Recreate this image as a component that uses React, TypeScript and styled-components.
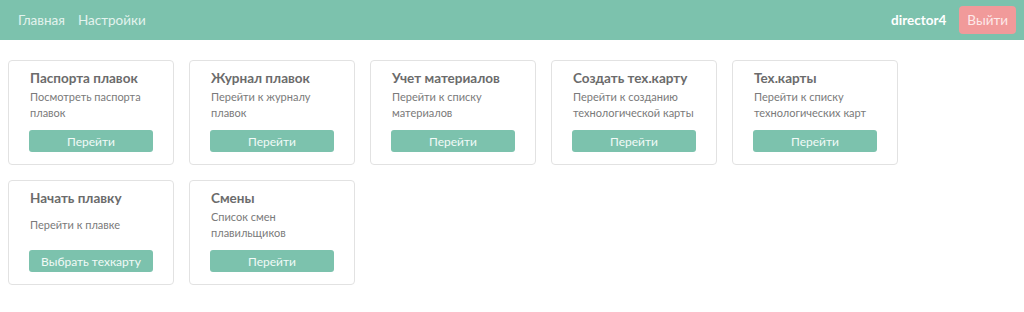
import styled, { createGlobalStyle } from 'styled-components'

const GlobalStyle = createGlobalStyle`
  body {
    margin: 0;
    background: #fff;
    font-family: Lato, "Open Sans", sans-serif;
  }
`;

const NavBar = styled.header`
  height: 40px;
  background: #7cc2ad;
  display: flex;
  align-items: center;
  justify-content: space-between;
  padding: 0 8px 0 18px;
  box-sizing: border-box;
`;

const NavLinks = styled.nav`
  display: flex;
  gap: 13px;
`;

const NavLink = styled.a`
  color: #e3f3ee;
  font-size: 13.5px;
  text-decoration: none;
  cursor: pointer;
`;

const UserBox = styled.div`
  display: flex;
  align-items: center;
  gap: 13px;
`;

const UserName = styled.span`
  color: #fff;
  font-weight: 700;
  font-size: 13.5px;
`;

const LogoutButton = styled.button`
  background: #f19a9a;
  color: #fde9e9;
  border: none;
  border-radius: 4px;
  height: 28px;
  padding: 0 8px;
  font-family: inherit;
  font-size: 13.5px;
  cursor: pointer;
`;

const Grid = styled.main`
  display: grid;
  grid-template-columns: repeat(5, 166px);
  gap: 15px 15px;
  padding: 20px 8px;
`;

const Card = styled.div`
  display: flex;
  flex-direction: column;
  justify-content: space-between;
  border: 1px solid #e2e2e2;
  border-radius: 4px;
  padding: 9px 20px 12px;
`;

const Title = styled.h3`
  margin: 0 0 3px 1px;
  font-size: 13.5px;
  line-height: 16px;
  font-weight: 700;
  color: #6b6b6b;
  white-space: nowrap;
`;

const Desc = styled.p`
  margin: 0 0 0 1px;
  font-size: 11px;
  line-height: 16px;
  color: #7a7a7a;
`;

const GoButton = styled.button`
  margin-top: 9px;
  width: 100%;
  height: 22px;
  background: #7cc2ad;
  color: #f2faf7;
  border: none;
  border-radius: 3px;
  font-family: inherit;
  font-size: 12px;
  cursor: pointer;
`;

const cards = [
  { title: 'Паспорта плавок', desc: 'Посмотреть паспорта плавок', action: 'Перейти' },
  { title: 'Журнал плавок', desc: 'Перейти к журналу плавок', action: 'Перейти' },
  { title: 'Учет материалов', desc: 'Перейти к списку материалов', action: 'Перейти' },
  { title: 'Создать тех.карту', desc: 'Перейти к созданию технологической карты', action: 'Перейти' },
  { title: 'Тех.карты', desc: 'Перейти к списку технологических карт', action: 'Перейти' },
  { title: 'Начать плавку', desc: 'Перейти к плавке', action: 'Выбрать техкарту' },
  { title: 'Смены', desc: 'Список смен плавильщиков', action: 'Перейти' },
];

function App() {
  return (
    <>
      <GlobalStyle />
      <NavBar>
        <NavLinks>
          <NavLink>Главная</NavLink>
          <NavLink>Настройки</NavLink>
        </NavLinks>
        <UserBox>
          <UserName>director4</UserName>
          <LogoutButton>Выйти</LogoutButton>
        </UserBox>
      </NavBar>
      <Grid>
        {cards.map((card) => (
          <Card key={card.title}>
            <Title>{card.title}</Title>
            <Desc>{card.desc}</Desc>
            <GoButton>{card.action}</GoButton>
          </Card>
        ))}
      </Grid>
    </>
  )
}

export default App
